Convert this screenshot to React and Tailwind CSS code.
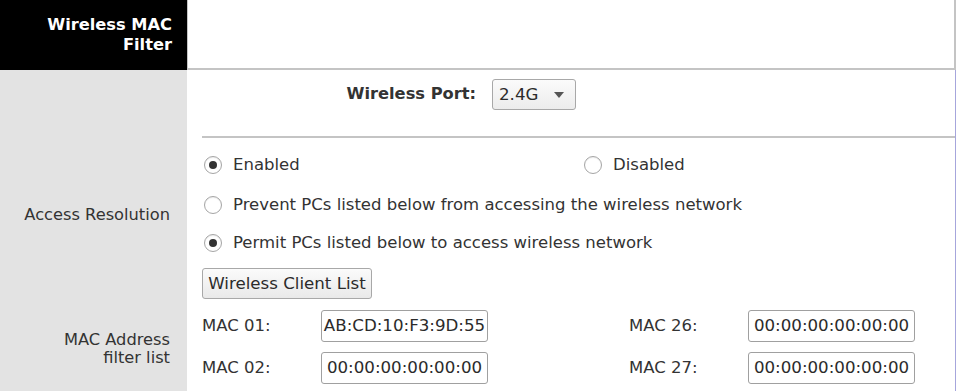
export default function App() {
  const Radio = ({ checked }) => (
    <span className="ml-[2px] w-[18px] h-[18px] rounded-full border border-[#a5a5a5] bg-white flex items-center justify-center shrink-0 shadow-[inset_0_1px_1px_rgba(0,0,0,0.08)]">
      {checked && <span className="w-[8px] h-[8px] rounded-full bg-[#333]" />}
    </span>
  );
  const MacInput = ({ value }) => (
    <div className="w-[167px] h-[32px] border border-[#a0a0a0] rounded-[3px] bg-white flex items-center justify-center text-[16.67px] text-[#2b2b2b] leading-none">
      {value}
    </div>
  );
  return (
    <div className="w-[956px] h-[391px] overflow-hidden bg-white font-['DejaVu_Sans',sans-serif] text-[16.5px] text-[#333]">
      <div className="flex h-[70px]">
        <div className="w-[187px] bg-black text-white font-bold leading-[20px] flex items-center justify-end pr-[15px] text-right text-[16.25px]">
          <div>
            Wireless MAC
            <br />
            Filter
          </div>
        </div>
        <div className="flex-1 border-l border-b-2 border-r-2 border-[#c4c4c4] bg-white" />
      </div>
      <div className="flex h-[321px]">
        <div className="w-[187px] bg-[#e3e3e3] flex flex-col items-end pr-[17px] leading-[18px] text-right text-[16.25px]">
          <div className="mt-[136px]">Access Resolution</div>
          <div className="mt-[107px]">
            MAC Address
            <br />
            filter list
          </div>
        </div>
        <div className="flex-1 border-r border-[#a6a6dc] flex flex-col">
          <div className="ml-[15px] h-[68px] border-b-2 border-[#c4c4c4]">
            <div className="flex items-center h-[31px] mt-[9px]">
              <div className="w-[274px] text-right font-bold text-[16.25px]">Wireless Port:</div>
              <div className="ml-[16px] w-[84px] h-[31px] border border-[#a8a8a8] rounded-[3px] bg-gradient-to-b from-[#fbfbfb] to-[#ececec] flex items-center pl-[6px] text-[16.67px] text-[#2b2b2b]">
                <span>2.4G</span>
                <svg className="ml-[16px]" width="10" height="6" viewBox="0 0 10 6">
                  <path d="M0 0 L10 0 L5 6 Z" fill="#555" />
                </svg>
              </div>
            </div>
          </div>
          <div className="pl-[15px] pt-[7px] flex flex-col">
            <div className="flex h-[40px] items-center">
              <div className="w-[380px] flex items-center gap-[11px]">
                <Radio checked />
                <span>Enabled</span>
              </div>
              <div className="flex items-center gap-[11px]">
                <Radio />
                <span>Disabled</span>
              </div>
            </div>
            <div className="flex h-[40px] items-center gap-[11px]">
              <Radio />
              <span>Prevent PCs listed below from accessing the wireless network</span>
            </div>
            <div className="flex h-[36px] items-center gap-[11px]">
              <Radio checked />
              <span>Permit PCs listed below to access wireless network</span>
            </div>
            <div className="mt-[7px]">
              <button className="h-[31px] w-[170px] border border-[#a8a8a8] rounded-[3px] bg-gradient-to-b from-[#fbfbfb] to-[#e9e9e9] text-[16.67px] text-[#2b2b2b] flex items-center justify-center">
                Wireless Client List
              </button>
            </div>
            <div className="mt-[11px] flex items-center h-[32px]">
              <div className="w-[119px]">MAC 01:</div>
              <MacInput value="AB:CD:10:F3:9D:55" />
              <div className="ml-[141px] w-[119px]">MAC 26:</div>
              <MacInput value="00:00:00:00:00:00" />
            </div>
            <div className="mt-[10px] flex items-center h-[32px]">
              <div className="w-[119px]">MAC 02:</div>
              <MacInput value="00:00:00:00:00:00" />
              <div className="ml-[141px] w-[119px]">MAC 27:</div>
              <MacInput value="00:00:00:00:00:00" />
            </div>
          </div>
        </div>
      </div>
    </div>
  );
}
